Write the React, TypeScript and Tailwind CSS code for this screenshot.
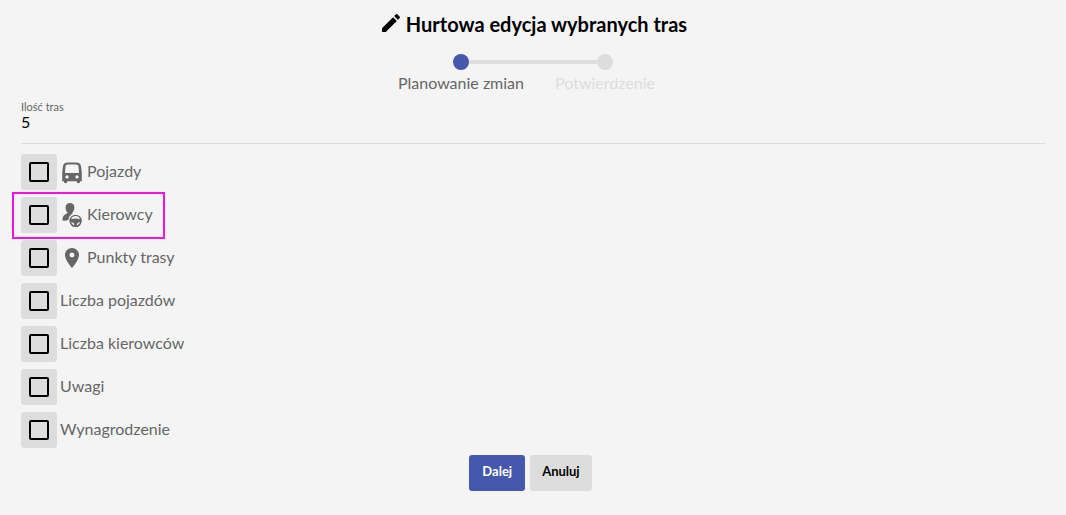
import { useState } from "react";
import type { ReactNode } from "react";
import { MdEdit, MdLocationOn } from "react-icons/md";

function BusIcon() {
  return (
    <svg viewBox="0 0 24 24" className="size-6 fill-current" aria-hidden="true">
      <path
        fillRule="evenodd"
        d="M7.500 2.400h9c2.700 0 4.200 1.300 4.500 3.800l.8 6.500v8.500h-1.700v.4c0 1-.7 1.600-1.700 1.600s-1.700-.6-1.700-1.600v-.4H7.300v.4c0 1-.7 1.600-1.700 1.600s-1.700-.6-1.700-1.600v-.4H2.200v-8.500L3 6.200C3.300 3.700 4.800 2.400 7.500 2.400zM7.800 4.600c-1.300 0-2.100.7-2.300 1.900l-.6 6.500h14.200l-.6-6.500c-.2-1.200-1-1.900-2.300-1.900zM7 15.200a1.700 1.700 0 1 0 0 3.400 1.700 1.700 0 0 0 0-3.400zM17 15.200a1.700 1.700 0 1 0 0 3.400 1.700 1.700 0 0 0 0-3.400z"
      />
    </svg>
  );
}

function DriverIcon() {
  return (
    <svg viewBox="0 0 24 24" className="size-6 fill-current" aria-hidden="true">
      <path d="M10 0c2.700 0 4.400 1.800 4.400 4.400 0 2.300-.9 4-2 5.200v1.200c-2.200 1.200-3.900 3.500-4 6.200-2 .6-4.200.9-5.900.6 0-2.700.3-4.500 1.700-5.400 1-.7 2.500-1.200 3.100-2.100V9.300C6.300 8.100 5.600 6.500 5.600 4.400 5.600 1.800 7.300 0 10 0z" />
      <path
        fillRule="evenodd"
        d="M15.600 11.800a6.200 6.200 0 1 1 0 12.400 6.200 6.200 0 0 1 0-12.400zM11.200 16.300c1.300-.5 2.800-.8 4.400-.8s3.100.3 4.400.8a4.600 4.600 0 0 0-8.800 0zM11.100 19a4.600 4.600 0 0 0 3.300 3.400c-.1-1.900-1.300-3.100-3.300-3.400zM20.100 19c-2 .3-3.200 1.500-3.300 3.400a4.600 4.600 0 0 0 3.300-3.400z"
      />
    </svg>
  );
}

type Field = { id: string; label: string; icon?: ReactNode; highlighted?: boolean };

const fields: Field[] = [
  { id: "vehicles", label: "Pojazdy", icon: <BusIcon /> },
  { id: "drivers", label: "Kierowcy", icon: <DriverIcon />, highlighted: true },
  { id: "points", label: "Punkty trasy", icon: <MdLocationOn className="size-6" aria-hidden="true" /> },
  { id: "vehicle-count", label: "Liczba pojazdów" },
  { id: "driver-count", label: "Liczba kierowców" },
  { id: "notes", label: "Uwagi" },
  { id: "salary", label: "Wynagrodzenie" },
];

function FieldRow({ field }: { field: Field }) {
  const [checked, setChecked] = useState(false);
  return (
    <li className="relative flex">
      <label htmlFor={field.id} className="flex cursor-pointer items-center gap-[3px]">
        <span className="flex size-9 items-center justify-center rounded-[3px] bg-[#ddd]">
          <input
            id={field.id}
            type="checkbox"
            checked={checked}
            onChange={(e) => setChecked(e.target.checked)}
            className="size-5 cursor-pointer appearance-none rounded-[2px] border-2 border-black checked:bg-[#4558ab]"
          />
        </span>
        {field.icon}
        <span className="pb-[3px]">{field.label}</span>
      </label>
      {field.highlighted && (
        <span className="pointer-events-none absolute -top-[5px] -left-[9px] h-[47px] w-[153px] border-2 border-[#fa0ee6]" />
      )}
    </li>
  );
}

export default function App() {
  return (
    <main className="min-h-screen bg-[#f4f4f4] px-[21px] pt-[11px] pb-6 font-['Lato','Noto_Sans',sans-serif] text-base leading-6 text-[#666]">
      <h1 className="flex items-start justify-center gap-[3px] text-xl leading-[26px] font-bold text-black">
        <MdEdit className="size-6" aria-hidden="true" />
        Hurtowa edycja wybranych tras
      </h1>

      <ol className="mx-auto mt-[17px] grid w-72 grid-cols-2 text-center">
        <li className="flex flex-col items-center" aria-current="step">
          <span className="flex h-4 w-full items-center">
            <span className="ml-auto flex w-20 items-center">
              <span className="size-4 shrink-0 rounded-full bg-[#4558ab]" />
              <span className="h-1 flex-1 bg-[#ddd]" />
            </span>
          </span>
          <span className="mt-px">Planowanie zmian</span>
        </li>
        <li className="flex flex-col items-center text-[#ddd]">
          <span className="flex h-4 w-full items-center">
            <span className="flex w-20 items-center">
              <span className="h-1 flex-1 bg-[#ddd]" />
              <span className="size-4 shrink-0 rounded-full bg-[#ddd]" />
            </span>
          </span>
          <span className="mt-px">Potwierdzenie</span>
        </li>
      </ol>

      <dl className="mt-1 border-b border-[#ddd] pb-[13px]">
        <dt className="text-[11px] leading-[15px]">Ilość tras</dt>
        <dd className="leading-4 text-black">5</dd>
      </dl>

      <ul className="mt-[10px] flex flex-col gap-[7px]">
        {fields.map((field) => (
          <FieldRow key={field.id} field={field} />
        ))}
      </ul>

      <div className="mt-[7px] flex justify-center gap-[5px] pr-[5px] text-[13px] leading-4 font-bold">
        <button type="button" className="h-9 rounded-[3px] bg-[#4558ab] px-[13px] pb-1 text-white">
          Dalej
        </button>
        <button type="button" className="h-9 rounded-[3px] bg-[#ddd] px-3 pb-1 text-black">
          Anuluj
        </button>
      </div>
    </main>
  );
}
